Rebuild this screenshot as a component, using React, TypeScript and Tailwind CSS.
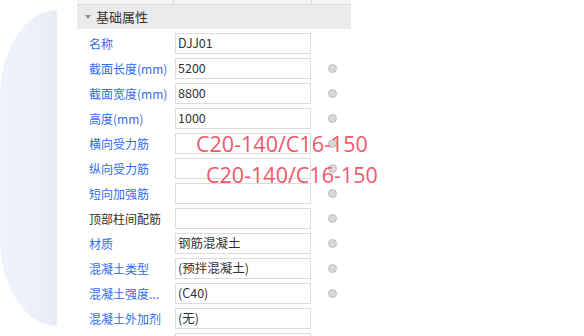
import React from "react";

interface PropRow {
  label: string;
  value: string;
  blue: boolean;
  dot: boolean;
}

const rows: PropRow[] = [
  { label: "名称", value: "DJJ01", blue: true, dot: false },
  { label: "截面长度(mm)", value: "5200", blue: true, dot: true },
  { label: "截面宽度(mm)", value: "8800", blue: true, dot: true },
  { label: "高度(mm)", value: "1000", blue: true, dot: true },
  { label: "横向受力筋", value: "", blue: true, dot: true },
  { label: "纵向受力筋", value: "", blue: true, dot: true },
  { label: "短向加强筋", value: "", blue: true, dot: true },
  { label: "顶部柱间配筋", value: "", blue: false, dot: true },
  { label: "材质", value: "钢筋混凝土", blue: true, dot: true },
  { label: "混凝土类型", value: "(预拌混凝土)", blue: true, dot: true },
  { label: "混凝土强度...", value: "(C40)", blue: true, dot: true },
  { label: "混凝土外加剂", value: "(无)", blue: true, dot: false },
  { label: "", value: "", blue: true, dot: false },
];

export default function App() {
  return (
    <div
      className="relative w-[584px] h-[336px] overflow-hidden bg-white flex items-start"
      style={{ fontFamily: '"Noto Sans CJK SC", "Noto Sans", sans-serif' }}
    >
      {/* decorative backdrop */}
      <div className="shrink-0 mt-[10px] h-[316px] w-[57px] rounded-l-[57px_88px] bg-gradient-to-r from-[#eef3fb] via-[#edf2fa] to-[#e7ecf4]" />

      {/* property panel */}
      <div className="shrink-0 ml-[20px] w-[274px] flex flex-col">
        <div className="shrink-0 h-[5px] flex bg-[#f4f4f4] border-b border-[#d9d9d9]">
          <div className="w-[97px] border-r border-[#d9d9d9]" />
          <div className="w-[138px] border-r border-[#d9d9d9]" />
        </div>
        <div className="shrink-0 h-[24px] flex items-center bg-[#ebebeb] pl-[8px] text-[#333]">
          <svg width="6" height="4" viewBox="0 0 6 4" className="mr-[5px]">
            <path d="M0 0 L6 0 L3 4 Z" fill="#8a8a8a" />
          </svg>
          <span className="text-[13px]">基础属性</span>
        </div>

        <div className="shrink-0 pt-[2px] flex flex-col">
          {rows.map((row, i) => (
            <div key={i} className="shrink-0 h-[25px] flex items-center pl-[12px]">
              <div
                className={`w-[86px] text-[12px] leading-none whitespace-nowrap ${
                  row.blue ? "text-[#2f6df0]" : "text-[#333]"
                }`}
              >
                {row.label}
              </div>
              <div className="w-[136px] h-[21px] border border-[#dcdcdc] bg-white flex items-center px-[2px] text-[12.5px] text-[#333] leading-none">
                {row.value}
              </div>
              {row.dot && (
                <div className="ml-[17px] w-[9px] h-[9px] rounded-full bg-[#d9d9d9] border border-[#bdbdbd]" />
              )}
            </div>
          ))}
        </div>
      </div>

      {/* annotation overlay */}
      <div
        className="absolute left-[196px] top-[133px] text-[21.5px] leading-none text-[#f2576a] whitespace-nowrap"
        style={{ fontFamily: '"Open Sans", sans-serif' }}
      >
        C20-140/C16-150
      </div>
      <div
        className="absolute left-[206px] top-[164px] text-[21.5px] leading-none text-[#f2576a] whitespace-nowrap"
        style={{ fontFamily: '"Open Sans", sans-serif' }}
      >
        C20-140/C16-150
      </div>
    </div>
  );
}
